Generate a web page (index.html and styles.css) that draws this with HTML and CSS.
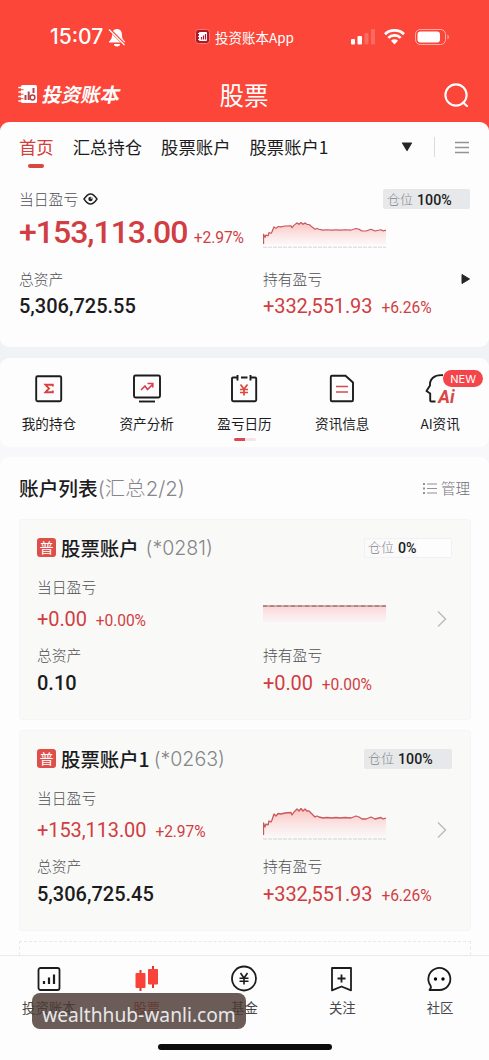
FILE: index.html
```html
<!DOCTYPE html>
<html lang="zh-CN">
<head>
<meta charset="utf-8">
<title>股票</title>
<link rel="stylesheet" href="styles.css">
</head>
<body>
<svg width="0" height="0" class="defs">
  <defs>
    <linearGradient id="fade" x1="0" y1="0" x2="0" y2="1"><stop offset="0" stop-color="#f9c1be"/><stop offset="1" stop-color="#fdf3f5" stop-opacity=".6"/></linearGradient>
    <linearGradient id="flatfade" x1="0" y1="0" x2="0" y2="1"><stop offset="0" stop-color="#fcd3d5"/><stop offset="1" stop-color="#fcebf0" stop-opacity=".5"/></linearGradient>
    <g id="trend">
      <path d="M.5 27V15L2 19L3 16L5 17L6 13L8 14L9 12L11 6L13 8L15 5.500L18 6L22 5L28 4.500L29 7L31 4L34 1L36 3L38 .5L40 3L42 1L44 3L46 3L48 5L50 7L52 9L56 9L60 10L75 9.500L88 10L93 8L97 9L99 11L103 11L108 9L112 11L118 10L123 10V28H.500Z" fill="url(#fade)"/>
      <path d="M.5 27V15L2 19L3 16L5 17L6 13L8 14L9 12L11 6L13 8L15 5.500L18 6L22 5L28 4.500L29 7L31 4L34 1L36 3L38 .5L40 3L42 1L44 3L46 3L48 5L50 7L52 9L54 8L56 9L60 10L64 9.500L69 10L73 9.500L77 10L82 9.500L88 10L93 8L96 9L99 11L103 11L108 9L112 11L118 9.500L120 11L123 10" fill="none" stroke="#c9585a" stroke-width="1.300" stroke-linejoin="round"/>
      <path d="M0 31H123" stroke="#d3d1d7" stroke-width="1" stroke-dasharray="4 1"/>
    </g>
  </defs>
</svg>
<div class="screen">
  <header class="top">
    <div class="status">
      <div class="clock">15:07
        <svg width="18" height="19" viewBox="0 0 18 19"><path d="M9 1C5.500 1 4 4 4 7C4 11 2.500 12 1 13.500V14.500H17V13.500C15.500 12 14 11 14 7C14 4 12.500 1 9 1Z" fill="#fff"/><path d="M6 16H12A3 2.500 0 0 1 6 16Z" fill="#fff"/><path d="M1.500 1.500L17 17" stroke="#fb4639" stroke-width="3"/><path d="M1 1.500L16.500 17" stroke="#fff" stroke-width="1.300"/></svg>
      </div>
      <div class="app">
        <svg width="15" height="15" viewBox="0 0 15 15"><rect x=".5" y=".5" width="14" height="14" rx="3" fill="#b3162a" stroke="#f17a70"/><rect x="4" y="3" width="8" height="9" rx="1" fill="#fff"/><path d="M3 4.500H5M3 7.500H5M3 10.500H5" stroke="#fff"/><path d="M6.500 10.500V8M8.500 10.500V6.500M10.500 10.500V5" stroke="#b3162a" stroke-width="1.200"/></svg>
        投资账本App</div>
      <div class="signals">
        <svg width="24" height="16" viewBox="0 0 24 16"><g fill="#fff"><rect x="0" y="10" width="4" height="5.500" rx="1"/><rect x="6.500" y="7" width="4.500" height="8.500" rx="1"/><g opacity=".2"><rect x="13.500" y="4" width="4" height="11.500" rx="1"/><rect x="20" y="0" width="4" height="15.500" rx="1"/></g></g></svg>
        <svg class="wifi" width="21" height="16" viewBox="0 0 21 16"><g fill="none" stroke="#fff" stroke-width="2.700"><path d="M1 5.200C6 .2 15 .2 20 5.200"/><path d="M4.300 8.900C7.500 5.600 13.500 5.600 16.700 8.900"/></g><path d="M7 11.700C9 9.900 12 9.900 14 11.700L10.500 15.500Z" fill="#fff"/></svg>
        <svg class="battery" width="34" height="16" viewBox="0 0 34 16"><rect x=".5" y=".5" width="30" height="15" rx="4.800" fill="none" stroke="#fff" stroke-opacity=".55"/><rect x="2.500" y="2.500" width="22.500" height="11" rx="3" fill="#fff"/><path d="M32.500 5.500A3 3 0 0 1 32.500 10.500Z" fill="#fff" opacity=".6"/></svg>
      </div>
    </div>
    <div class="titlebar">
      <div class="brand">
        <svg width="20" height="20" viewBox="0 0 20 20"><rect x="3" y="1" width="16" height="18" rx="1.500" fill="#fff"/><path d="M1 3.500H5M1 8H5M1 12.500H5M1 17H5" stroke="#fff" stroke-width="1.700" stroke-linecap="round"/><path d="M3 5.700H5.500M3 10.200H5.500M3 14.700H5.500" stroke="#fb4639"/><path d="M7.500 16V11M10.700 16V7.500M15.500 9V4" stroke="#b5404a" stroke-width="2"/><circle cx="14.500" cy="13.500" r="2.400" fill="none" stroke="#b5404a" stroke-width="1.500"/></svg>
        <span class="wordmark">投资账本</span></div>
      <h1>股票</h1>
      <svg class="search" width="25" height="25" viewBox="0 0 25 25" fill="none" stroke="#fff" stroke-width="2.100" stroke-linecap="round"><circle cx="12" cy="12" r="10.600"/><path d="M19 19.500L23 23"/></svg>
    </div>
  </header>

  <section class="panel summary">
    <nav class="tabs">
      <span class="tab on">首页</span><span class="tab">汇总持仓</span><span class="tab">股票账户</span><span class="tab">股票账户1</span>
      <div class="tabtools">
        <svg width="12" height="10" viewBox="0 0 12 10"><path d="M1.500 1H10.500L6 8.500Z" fill="#262626" stroke="#262626" stroke-width="1.200" stroke-linejoin="round"/></svg>
        <i class="rule"></i>
        <svg width="14" height="13" viewBox="0 0 14 13"><path d="M0 1.500H14M0 6.500H14M0 11.500H14" stroke="#929298" stroke-width="1.300"/></svg>
      </div>
    </nav>
    <div class="row label first">
      <span class="cap">当日盈亏</span>
      <svg width="15" height="12" viewBox="0 0 15 12"><path d="M1 6C3.500 2.300 5.500 1 7.500 1S11.500 2.300 14 6C11.500 9.700 9.500 11 7.500 11S3.500 9.700 1 6Z" fill="none" stroke="#222" stroke-width="1.400"/><circle cx="7.500" cy="6" r="2.200" fill="#222"/><circle cx="8.300" cy="5" r=".8" fill="#fff"/></svg>
      <span class="pill"><span>仓位</span><b>100%</b></span>
    </div>
    <div class="cols hero">
      <div class="val red"><b class="big">+153,113.00</b><small>+2.97%</small></div>
      <svg width="123" height="26" viewBox="0 0 123 32" preserveAspectRatio="none"><use href="#trend"/></svg>
    </div>
    <div class="cols caps"><span class="cap">总资产</span><span class="cap">持有盈亏</span>
      <svg class="play" width="10" height="12" viewBox="0 0 10 12"><path d="M1 1.500V10.500L8.500 6Z" fill="#262626" stroke="#262626" stroke-linejoin="round"/></svg></div>
    <div class="cols nums"><div class="val"><b>5,306,725.55</b></div><div class="val red"><b>+332,551.93</b><small>+6.26%</small></div></div>
  </section>

  <section class="panel shortcuts">
    <div class="entry"><svg width="30" height="32" viewBox="0 0 30 32"><rect x="2.200" y="3.200" width="25" height="25" rx="1.500" fill="none" stroke="#1c1c1c" stroke-width="1.900"/><path d="M18.800 13.500V11.800H11.500L15 15.500L11.500 19.200H18.800V17.500" fill="none" stroke="#d9423c" stroke-width="1.900"/></svg><span>我的持仓</span></div>
    <div class="entry"><svg width="30" height="32" viewBox="0 0 30 32"><rect x="2" y="2.500" width="26" height="22" rx="1.500" fill="none" stroke="#1c1c1c" stroke-width="1.900"/><path d="M7 28.500H23" stroke="#1c1c1c" stroke-width="1.900"/><path d="M9 17L13 13L15.500 16.500L20.500 11.500M15.500 10.500H20.800V14.500" fill="none" stroke="#d83d50" stroke-width="1.600"/></svg><span>资产分析</span></div>
    <div class="entry current"><svg width="30" height="32" viewBox="0 0 30 32"><path d="M8.500 4.500H4Q3 4.500 3 5.500V27Q3 28.200 4.200 28.200H26Q27.200 28.200 27.200 27V5.500Q27.200 4.500 26 4.500H21.500M12 4.500H18.500M8.500 2V7.500M21.500 2V7.500" fill="none" stroke="#1c1c1c" stroke-width="1.900"/><path d="M11.500 11.500L15 16L18.500 11.500M15 16V22.500M11 16.500H19M11 19.500H19" fill="none" stroke="#d94a3d" stroke-width="1.700"/></svg><span>盈亏日历</span></div>
    <div class="entry"><svg width="30" height="32" viewBox="0 0 30 32"><path d="M5 2.800H18.500L26 9.500V27Q26 28.300 24.800 28.300H5Q3.800 28.300 3.800 27V4Q3.800 2.800 5 2.800Z" fill="none" stroke="#1c1c1c" stroke-width="1.900"/><path d="M9 13.500H21M9 19H21" stroke="#cf4d50" stroke-width="1.700"/></svg><span>资讯信息</span></div>
    <div class="entry"><svg width="30" height="32" viewBox="0 0 30 32"><path d="M18 2.200C9 1.500 4.500 6 5 12.500L1.500 18L5.200 20.500V27.500Q5.200 28.500 6.500 28.500H10.500" fill="none" stroke="#1c1c1c" stroke-width="1.900" stroke-linejoin="round"/></svg><span>AI资讯</span><em class="ai">Ai</em><em class="new">NEW</em></div>
  </section>

  <section class="panel accounts">
    <div class="listhead"><h2>账户列表<span>(汇总2/2)</span></h2>
      <div class="manage"><svg width="14" height="13" viewBox="0 0 14 13"><path d="M4 2H14M4 6.500H14M4 11H14" stroke="#929298" stroke-width="1.200"/><path d="M0 2H2M0 6.500H2M0 11H2" stroke="#929298" stroke-width="1.800"/></svg>管理</div></div>
    <article class="card">
      <div class="name"><i>普</i><b>股票账户</b><span class="no spaced">(*0281)</span><span class="pill empty"><span>仓位</span><b>0%</b></span></div>
      <div class="cap line1">当日盈亏</div>
      <div class="cols line2"><div class="val red"><b>+0.00</b><small>+0.00%</small></div>
        <svg class="spark" width="123" height="32" viewBox="0 0 123 32"><rect y="9" width="123" height="16" fill="url(#flatfade)"/><path d="M0 9H123" stroke="#c08f8c" stroke-width="1.500"/><path d="M0 9H123" stroke="#8e6f6c" stroke-dasharray="4 3"/></svg>
        <svg class="chev" width="10" height="18" viewBox="0 0 10 18"><path d="M1 1.500L8.500 9L1 16.500" fill="none" stroke="#bcbcc3" stroke-width="1.500"/></svg></div>
      <div class="cols line3"><span class="cap">总资产</span><span class="cap">持有盈亏</span></div>
      <div class="cols line4"><div class="val"><b>0.10</b></div><div class="val red"><b>+0.00</b><small>+0.00%</small></div></div>
    </article>
    <article class="card">
      <div class="name"><i>普</i><b>股票账户1</b><span class="no">(*0263)</span><span class="pill"><span>仓位</span><b>100%</b></span></div>
      <div class="cap line1">当日盈亏</div>
      <div class="cols line2"><div class="val red"><b>+153,113.00</b><small>+2.97%</small></div>
        <svg class="spark" width="123" height="32" viewBox="0 0 123 32"><use href="#trend"/></svg>
        <svg class="chev" width="10" height="18" viewBox="0 0 10 18"><path d="M1 1.500L8.500 9L1 16.500" fill="none" stroke="#bcbcc3" stroke-width="1.500"/></svg></div>
      <div class="cols line3"><span class="cap">总资产</span><span class="cap">持有盈亏</span></div>
      <div class="cols line4"><div class="val"><b>5,306,725.45</b></div><div class="val red"><b>+332,551.93</b><small>+6.26%</small></div></div>
    </article>
    <div class="ghost"></div>
  </section>

  <footer class="tabbar">
    <div class="item"><svg width="28" height="28" viewBox="0 0 28 28"><rect x="3.500" y="3" width="21" height="22" rx="2" fill="none" stroke="#1c1c1c" stroke-width="1.800"/><path d="M9 19V16M14 19V12.500M19 19V9.500" stroke="#1c1c1c" stroke-width="2.200"/></svg><span>投资账本</span></div>
    <div class="item active"><svg width="28" height="28" viewBox="0 0 28 28"><path d="M7.500 5V26M20 1V23" stroke="#d93832" stroke-width="2"/><rect x="2.500" y="8" width="10" height="15" rx="1" fill="#f9423a"/><rect x="15" y="4" width="10" height="15.500" rx="1" fill="#f9423a"/></svg><span>股票</span></div>
    <div class="item"><svg width="28" height="28" viewBox="0 0 28 28"><circle cx="14" cy="13.500" r="12" fill="none" stroke="#1c1c1c" stroke-width="1.800"/><path d="M10.500 8L14 13L17.500 8M14 13V19.500M9.500 13.300H18.500M9.500 16.300H18.500" fill="none" stroke="#1c1c1c" stroke-width="1.600"/></svg><span>基金</span></div>
    <div class="item"><svg width="28" height="28" viewBox="0 0 28 28"><path d="M4 3H23V25.300L13.500 21.500L4 25.300Z" fill="none" stroke="#1c1c1c" stroke-width="1.800" stroke-linejoin="round"/><path d="M13.500 9.500V17.500M9.500 13.500H17.500" stroke="#1c1c1c" stroke-width="1.800"/></svg><span>关注</span></div>
    <div class="item"><svg width="28" height="28" viewBox="0 0 28 28"><path d="M3.500 25H13.500A11 11 0 1 0 4.500 20.500L5 22.500Z" fill="none" stroke="#1c1c1c" stroke-width="1.800" stroke-linejoin="round"/><circle cx="9.500" cy="14" r="1.700"/><circle cx="17" cy="14" r="1.700"/></svg><span>社区</span></div>
    <div class="homebar"></div>
    <div class="watermark">wealthhub-wanli.com</div>
  </footer>
</div>
</body>
</html>
```
FILE: styles.css
```css
* { box-sizing: border-box; }
body { margin: 0; font-family: "Noto Sans CJK SC", sans-serif; color: #1c1c1e; background: #fdfdfd; }
svg { display: block; flex: none; }
i, em { font-style: normal; }
.defs { position: absolute; }
.screen { width: 489px; height: 1060px; overflow: hidden; display: flex; flex-direction: column; background: linear-gradient(#f1f2f5 400px, #f8f8fa 400px); }

.top { height: 130px; margin-bottom: -8px; flex: none; background: #fb4639; color: #fff; }
.status { height: 74px; display: grid; grid-template-columns: 195px 156px 1fr; align-items: center; }
.clock { display: flex; align-items: center; gap: 5px; padding-left: 50px; font: 500 21px/24px Inter, sans-serif; }
.app { display: flex; align-items: center; gap: 5px; font-size: 13.5px; line-height: 18px; padding-bottom: 1px; white-space: nowrap; }
.signals { display: flex; align-items: center; }
.wifi { margin-left: 9px; }
.battery { margin-left: 10px; }
.titlebar { height: 42px; display: grid; grid-template-columns: 150px 1fr 150px; align-items: center; padding: 0 20px 0 18px; }
.brand { display: flex; align-items: center; gap: 5px; padding-bottom: 2px; }
.wordmark { font-size: 19.5px; line-height: 24px; font-weight: 700; transform: skewX(-12deg); letter-spacing: -.1px; }
.top h1 { margin: 0; padding-left: 1px; font-size: 24.5px; line-height: 30px; font-weight: 400; text-align: center; }
.search { justify-self: end; }

.panel { background: #fdfdfd; flex: none; }
.summary { height: 225px; border-radius: 9px; margin-bottom: 11px; padding: 0 19px; }
.tabs { display: flex; height: 50px; align-items: center; gap: 19px; font-size: 17.35px; line-height: 24px; white-space: nowrap; }
.tab.on { color: #d43f3b; position: relative; }
.tab.on::after { content: ""; position: absolute; left: 9px; bottom: -9px; width: 16px; height: 4px; border-radius: 2px; background: #d8483f; }
.tabtools { margin-left: auto; margin-right: 1px; display: flex; align-items: center; gap: 20px; }
.rule { width: 1px; height: 20px; margin-left: 1px; background: #dcdce0; }
.row.label { display: flex; align-items: center; gap: 5px; }
.first { height: 24px; margin-top: 15px; }
.cap { font-size: 14.8px; line-height: 20px; color: #505055; font-weight: 300; }
.pill { margin-left: auto; width: 87px; height: 20px; padding-left: 4px; display: flex; align-items: center; gap: 4px; background: #e6e8e9; border-radius: 2px; font-size: 13px; line-height: 18px; color: #85858a; white-space: nowrap; }
.pill > span { font-weight: 300; padding-bottom: 1px; }
.pill b { font: 500 14.2px/18px Roboto, sans-serif; color: #1c1c1e; padding-top: 1px; }
.pill.empty { background: linear-gradient(90deg, #f9faf9 60%, #fdfdfe 60%); box-shadow: inset 0 0 0 1px #f0f1f6; }
.cols { display: grid; grid-template-columns: 244px 123px 1fr; align-items: center; }
.val { display: flex; align-items: baseline; white-space: nowrap; font-family: Roboto, sans-serif; }
.val b { font-size: 20px; line-height: 26px; font-weight: 500; color: #1c1c1e; letter-spacing: 0; }
.val small { position: relative; top: -.5px; font-size: 15.6px; letter-spacing: -.1px; margin-left: 9px; }
.val.red, .val.red b { color: #d13d42; }
.val.red b { font-weight: 400; letter-spacing: -.1px; }
.val .big, .val.red .big { font-size: 32px; line-height: 40px; font-weight: 500; letter-spacing: -1px; }
.hero { height: 42px; }
.hero small { margin-left: 6.5px; }
.hero svg { margin-top: 5px; }
.caps { height: 26px; margin-top: 13px; }
.play { justify-self: end; margin-right: -1px; }
.nums { height: 28px; }

.shortcuts { height: 89px; border-radius: 9px; margin-bottom: 10px; display: grid; grid-template-columns: repeat(5, 1fr); padding-top: 15px; }
.entry { position: relative; display: flex; flex-direction: column; align-items: center; gap: 8px; font-size: 13.6px; line-height: 20px; }
.current::after { content: ""; position: absolute; left: 38px; top: 65px; width: 22px; height: 2.5px; border-radius: 2px; background: linear-gradient(90deg, #df4654 50%, #f6e3e8 50%); }
.ai { position: absolute; left: 47px; top: 14px; font: italic 700 18px/20px Roboto, sans-serif; color: #d64746; }
.new { position: absolute; left: 52px; top: -3px; width: 40px; height: 17px; border-radius: 9px; background: #f4454a; color: #fff; font: 11px/18px Inter, sans-serif; text-align: center; }

.accounts { height: 498px; border-radius: 9px 9px 0 0; padding: 0 18px 0 19px; overflow: hidden; }
.listhead { height: 62px; padding-right: 1px; display: flex; align-items: center; justify-content: space-between; }
.listhead h2 { margin: 0; font-size: 19.7px; line-height: 28px; font-weight: 500; }
.listhead h2 span { font-family: Inter, "Noto Sans CJK SC", sans-serif; font-weight: 300; font-size: 20.4px; color: #85858a; }
.manage { display: flex; align-items: center; gap: 4px; font-size: 14.5px; line-height: 20px; font-weight: 300; color: #707076; }
.card { height: 201px; margin-bottom: 10px; padding: 13px 18px 0 17px; background: #f9faf8; border: 1px solid #f4f5f7; border-radius: 3px; }
.name { height: 29px; display: flex; align-items: center; font-size: 19.4px; line-height: 28px; white-space: nowrap; }
.name > i { width: 19px; height: 19px; margin-right: 5px; border-radius: 3px; background: #df4f4a; color: #fff; font-size: 14px; line-height: 18px; text-align: center; }
.name > b { font-weight: 500; }
.no { margin-left: 4px; font: 300 19.6px/28px Inter, sans-serif; color: #85858a; }
.no.spaced { margin-left: 7px; }
.name .pill { width: 88px; }
.line1 { margin-top: 15px; }
.line2 { height: 32px; margin-top: 6px; }
.line2, .line3, .line4 { grid-template-columns: 226px 123px 1fr; }
.spark { margin-top: -12px; }
.chev { justify-self: end; margin-right: 5px; }
.line3 { height: 22px; margin-top: 9px; }
.line4 { height: 26px; margin-top: 4px; }
.ghost { height: 20px; margin-top: 2px; border: 1px dashed #e9e9ed; }

.tabbar { position: relative; height: 105px; flex: none; background: #fdfdfd; border-top: 1px solid #e9e9f0; display: grid; grid-template-columns: repeat(5, 1fr); padding-top: 9px; }
.item { display: flex; flex-direction: column; align-items: center; gap: 4px; font-size: 13.4px; line-height: 20px; color: #48484c; }
.item.active { color: #d94640; }
.homebar { position: absolute; left: 158px; bottom: 10px; width: 174px; height: 6px; border-radius: 3px; background: #0c0c0c; }
.watermark { position: absolute; left: 32px; top: 37px; width: 214px; height: 36px; border-radius: 8px; background: rgba(75, 56, 50, .82); color: #e6e8ea; font: 19.2px/43px "Noto Sans", sans-serif; text-align: center; white-space: nowrap; }
```
